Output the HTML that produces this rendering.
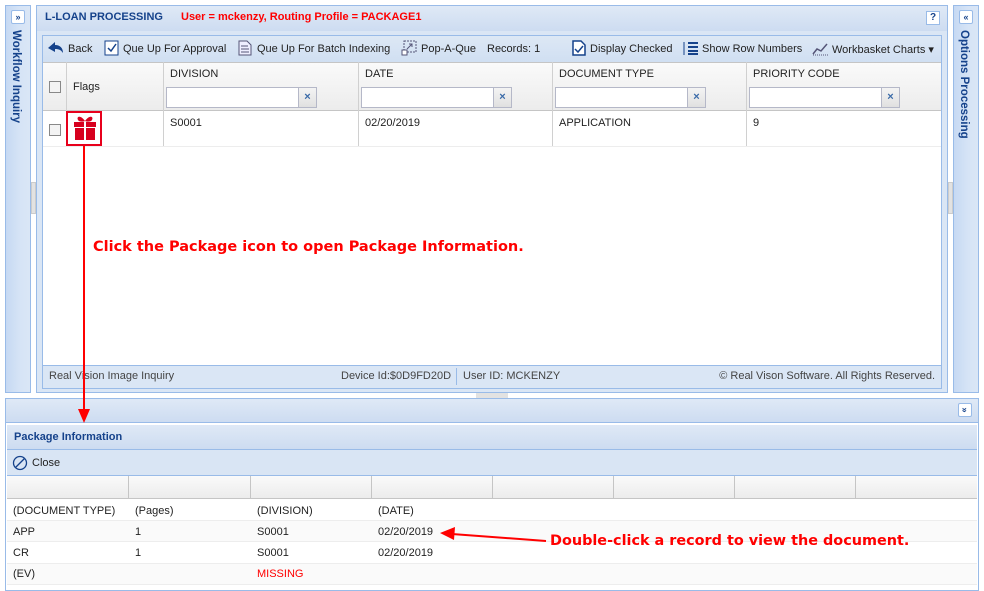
<!DOCTYPE html>
<html><head><meta charset="utf-8"><style>
*{box-sizing:border-box;margin:0;padding:0}
body{width:984px;height:591px;background:#fff;position:relative;overflow:hidden;font-family:"Liberation Sans",sans-serif;font-size:11px;color:#222}
.a{position:absolute}
.bl{border:1px solid #99bbe8}
.grad{background:linear-gradient(#dfe9f6,#cddcf1)}
.side{background:linear-gradient(90deg,#c6d9f3,#d6e4f6 60%,#dae6f6)}
.t{position:absolute;white-space:nowrap}
.hb{background:linear-gradient(#fafafa,#ececec)}
.filt{position:absolute;height:21px;background:#fff;border:1px solid #b5b8c8}
.fx{position:absolute;width:19px;height:21px;border:1px solid #b5b8c8;background:linear-gradient(#f4f4f4,#e0e0e0);color:#3a6aa8;font-weight:bold;text-align:center;line-height:19px;font-size:11px}
.vl{position:absolute;width:1px;background:#d0d0d0}
.ann{font-family:"DejaVu Sans",sans-serif;font-weight:bold;color:#f00}
</style></head><body>
<div class="a bl side" style="left:5px;top:5px;width:26px;height:388px"></div>
<div class="a" style="left:11px;top:10px;width:14px;height:14px;border:1px solid #99bbe8;background:#fff;border-radius:2px;font-size:9px;line-height:12px;text-align:center;color:#15428b;font-weight:bold">»</div>
<div class="t" style="left:10px;top:30px;writing-mode:vertical-rl;font-weight:bold;color:#15428b;font-size:11.5px">Workflow Inquiry</div>
<div class="a" style="left:31px;top:182px;width:5px;height:32px;background:#e2e2e2;border:1px solid #ccc"></div>
<div class="a bl side" style="left:953px;top:5px;width:26px;height:388px"></div>
<div class="a" style="left:959px;top:10px;width:14px;height:14px;border:1px solid #99bbe8;background:#fff;border-radius:2px;font-size:9px;line-height:12px;text-align:center;color:#15428b;font-weight:bold">«</div>
<div class="t" style="left:958px;top:30px;writing-mode:vertical-rl;font-weight:bold;color:#15428b;font-size:11.5px">Options Processing</div>
<div class="a" style="left:948px;top:182px;width:5px;height:32px;background:#e2e2e2;border:1px solid #ccc"></div>
<div class="a bl" style="left:36px;top:5px;width:912px;height:388px;background:#dae6f5"></div>
<div class="a grad" style="left:37px;top:6px;width:910px;height:25px"></div>
<div class="t" style="left:45px;top:11px;font-weight:bold;color:#15428b">L-LOAN PROCESSING</div>
<div class="t" style="left:181px;top:11px;font-weight:bold;color:#f00">User = mckenzy, Routing Profile = PACKAGE1</div>
<div class="a" style="left:926px;top:11px;width:14px;height:14px;border:1px solid #99bbe8;background:#fff;font-size:10px;font-weight:bold;color:#15428b;text-align:center;line-height:12px">?</div>
<div class="a bl" style="left:42px;top:35px;width:900px;height:354px;background:#fff"></div>
<div class="a" style="left:43px;top:36px;width:898px;height:26px;background:linear-gradient(#dde8f5,#d0dff2)"></div>
<svg class="a" style="left:47px;top:40px" width="18" height="16"><path d="M1 8 L8 2 L8 5 C13 5 16 8 16 13 C14 10 12 9 8 9 L8 12 Z" fill="#15428b"/></svg>
<div class="t" style="left:68px;top:43px">Back</div>
<svg class="a" style="left:104px;top:40px" width="16" height="16"><rect x="1" y="1" width="13" height="14" fill="#fff" stroke="#15428b"/><path d="M4 8 L7 11 L12 4" stroke="#15428b" stroke-width="1.5" fill="none"/></svg>
<div class="t" style="left:123px;top:43px">Que Up For Approval</div>
<svg class="a" style="left:237px;top:40px" width="16" height="16"><path d="M2 1 H10 L14 5 V15 H2 Z" fill="#eef" stroke="#557"/><path d="M4 6H11M4 9H12M4 12H12" stroke="#557"/></svg>
<div class="t" style="left:257px;top:43px">Que Up For Batch Indexing</div>
<svg class="a" style="left:401px;top:40px" width="16" height="16"><rect x="3" y="1" width="12" height="11" fill="none" stroke="#557" stroke-dasharray="2 1"/><rect x="1" y="10" width="5" height="5" fill="#fff" stroke="#557"/><path d="M6 9 L11 4 M8 4H11V7" stroke="#557" fill="none"/></svg>
<div class="t" style="left:421px;top:43px">Pop-A-Que</div>
<div class="t" style="left:487px;top:43px">Records: 1</div>
<svg class="a" style="left:571px;top:40px" width="16" height="16"><path d="M2 1 H10 L14 5 V15 H2 Z" fill="#fff" stroke="#15428b" stroke-width="1.5"/><path d="M4 9 L7 12 L12 6" stroke="#15428b" stroke-width="1.5" fill="none"/></svg>
<div class="t" style="left:590px;top:43px">Display Checked</div>
<svg class="a" style="left:682px;top:40px" width="17" height="16"><path d="M6 3H16M6 7H16M6 11H16M6 14H16" stroke="#15428b" stroke-width="2"/><path d="M2 2V15" stroke="#15428b"/></svg>
<div class="t" style="left:702px;top:43px">Show Row Numbers</div>
<svg class="a" style="left:812px;top:40px" width="17" height="16"><path d="M1 14 L5 9 L9 11 L15 4" stroke="#557" fill="none" stroke-width="1.5"/><path d="M1 15H16" stroke="#557" stroke-dasharray="1 1"/></svg>
<div class="t" style="left:832px;top:43px">Workbasket Charts ▾</div>
<div class="a hb" style="left:43px;top:62px;width:898px;height:49px;border-top:1px solid #c5c5c5;border-bottom:1px solid #c5c5c5"></div>
<div class="vl" style="left:66px;top:62px;height:85px"></div>
<div class="vl" style="left:163px;top:62px;height:85px"></div>
<div class="vl" style="left:358px;top:62px;height:85px"></div>
<div class="vl" style="left:552px;top:62px;height:85px"></div>
<div class="vl" style="left:746px;top:62px;height:85px"></div>
<div class="a" style="left:49px;top:81px;width:12px;height:12px;border:1px solid #888;background:#f3f3f3"></div>
<div class="t" style="left:73px;top:81px">Flags</div>
<div class="t" style="left:170px;top:68px">DIVISION</div>
<div class="t" style="left:365px;top:68px">DATE</div>
<div class="t" style="left:559px;top:68px">DOCUMENT TYPE</div>
<div class="t" style="left:753px;top:68px">PRIORITY CODE</div>
<div class="filt" style="left:166px;top:87px;width:133px"></div><div class="fx" style="left:298px;top:87px">×</div>
<div class="filt" style="left:361px;top:87px;width:133px"></div><div class="fx" style="left:493px;top:87px">×</div>
<div class="filt" style="left:555px;top:87px;width:133px"></div><div class="fx" style="left:687px;top:87px">×</div>
<div class="filt" style="left:749px;top:87px;width:133px"></div><div class="fx" style="left:881px;top:87px">×</div>
<div class="a" style="left:43px;top:146px;width:898px;height:1px;background:#ededed"></div>
<div class="a" style="left:49px;top:124px;width:12px;height:12px;border:1px solid #888;background:#f3f3f3"></div>
<div class="t" style="left:170px;top:117px">S0001</div>
<div class="t" style="left:365px;top:117px">02/20/2019</div>
<div class="t" style="left:559px;top:117px">APPLICATION</div>
<div class="t" style="left:753px;top:117px">9</div>
<div class="a" style="left:66px;top:111px;width:36px;height:35px;border:2px solid #e8001c"></div>
<svg class="a" style="left:72px;top:114px" width="26" height="28"><path d="M13 7 C9 1 4 2 6 6 C7 8 11 8 13 7 C15 8 19 8 20 6 C22 2 17 1 13 7Z" fill="#d7001e"/><rect x="2" y="8" width="22" height="5" fill="#d7001e"/><rect x="3" y="14" width="20" height="12" fill="#d7001e"/><rect x="12" y="8" width="2" height="18" fill="#fff"/></svg>
<div class="a" style="left:43px;top:365px;width:898px;height:23px;background:#dae6f5;border-top:1px solid #99bbe8"></div>
<div class="t" style="left:49px;top:370px;color:#444">Real Vision Image Inquiry</div>
<div class="t" style="left:341px;top:370px;color:#444">Device Id:$0D9FD20D</div>
<div class="a" style="left:456px;top:368px;width:1px;height:17px;background:#99bbe8"></div>
<div class="t" style="left:463px;top:370px;color:#444">User ID: MCKENZY</div>
<div class="t" style="right:49px;top:370px;color:#444">© Real Vison Software. All Rights Reserved.</div>
<div class="a" style="left:476px;top:393px;width:32px;height:5px;background:#e2e2e2"></div>
<div class="a bl" style="left:5px;top:398px;width:974px;height:193px;background:#fff"></div>
<div class="a grad" style="left:6px;top:399px;width:972px;height:24px;border-bottom:1px solid #99bbe8"></div>
<div class="a" style="left:958px;top:403px;width:14px;height:14px;border:1px solid #99bbe8;background:#fff;border-radius:2px;font-size:9px;line-height:12px;text-align:center;color:#15428b;transform:rotate(90deg);font-weight:bold">»</div>
<div class="a grad" style="left:7px;top:425px;width:970px;height:25px;border-bottom:1px solid #99bbe8"></div>
<div class="t" style="left:14px;top:431px;font-weight:bold;color:#15428b">Package Information</div>
<div class="a" style="left:7px;top:450px;width:970px;height:26px;background:#d9e5f4;border-bottom:1px solid #99bbe8"></div>
<svg class="a" style="left:12px;top:455px" width="16" height="16"><circle cx="8" cy="8" r="6.5" fill="none" stroke="#15428b" stroke-width="1.3"/><path d="M3.5 12.5 L12.5 3.5" stroke="#15428b" stroke-width="1.3"/></svg>
<div class="t" style="left:32px;top:457px">Close</div>
<div class="a hb" style="left:7px;top:476px;width:970px;height:23px;border-bottom:1px solid #c5c5c5"></div>
<div class="vl" style="left:128px;top:476px;height:23px;background:#c5c5c5"></div>
<div class="vl" style="left:250px;top:476px;height:23px;background:#c5c5c5"></div>
<div class="vl" style="left:371px;top:476px;height:23px;background:#c5c5c5"></div>
<div class="vl" style="left:492px;top:476px;height:23px;background:#c5c5c5"></div>
<div class="vl" style="left:613px;top:476px;height:23px;background:#c5c5c5"></div>
<div class="vl" style="left:734px;top:476px;height:23px;background:#c5c5c5"></div>
<div class="vl" style="left:855px;top:476px;height:23px;background:#c5c5c5"></div>
<div class="a" style="left:7px;top:520px;width:970px;height:22px;background:#fafafa;border-top:1px solid #ededed;border-bottom:1px solid #ededed"></div>
<div class="a" style="left:7px;top:563px;width:970px;height:22px;background:#fafafa;border-top:1px solid #ededed;border-bottom:1px solid #ededed"></div>
<div class="t" style="left:13px;top:505px">(DOCUMENT TYPE)</div><div class="t" style="left:135px;top:505px">(Pages)</div><div class="t" style="left:257px;top:505px">(DIVISION)</div><div class="t" style="left:378px;top:505px">(DATE)</div>
<div class="t" style="left:13px;top:526px">APP</div><div class="t" style="left:135px;top:526px">1</div><div class="t" style="left:257px;top:526px">S0001</div><div class="t" style="left:378px;top:526px">02/20/2019</div>
<div class="t" style="left:13px;top:547px">CR</div><div class="t" style="left:135px;top:547px">1</div><div class="t" style="left:257px;top:547px">S0001</div><div class="t" style="left:378px;top:547px">02/20/2019</div>
<div class="t" style="left:13px;top:568px">(EV)</div><div class="t" style="left:257px;top:568px;color:#f00">MISSING</div>
<svg class="a" style="left:0;top:0" width="984" height="591">
<path d="M84 146 V412" stroke="#f00" stroke-width="2"/>
<path d="M78 409 L90 409 L84 423 Z" fill="#f00"/>
<path d="M546 541 L452 534" stroke="#f00" stroke-width="2"/>
<path d="M440 533 L455 527 L454 540 Z" fill="#f00"/>
</svg>
<div class="t ann" style="left:93px;top:239px;font-size:14.5px">Click the Package icon to open Package Information.</div>
<div class="t ann" style="left:550px;top:533px;font-size:14.4px">Double-click a record to view the document.</div>
</body></html>
